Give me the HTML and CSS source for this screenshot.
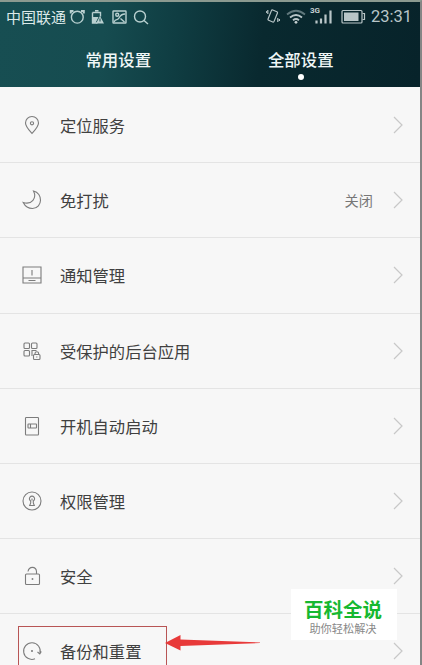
FILE: index.html
```html
<!DOCTYPE html>
<html lang="zh-CN">
<head>
<meta charset="utf-8">
<title>全部设置</title>
<link rel="stylesheet" href="styles.css">
</head>
<body>
<div class="phone">
  <header class="header">
    <div class="status">
      <span class="carrier">中国联通</span>
      <svg class="status-left" width="82" height="18" viewBox="0 0 82 18" fill="none" stroke="#b9d0d0" stroke-width="1.4">
        <circle cx="8.300" cy="9.200" r="5.900"/><path d="M1.800 5.500V3H4.500M12 3h2.800v2.500" stroke-width="2"/>
        <path d="M23.500 4.500h8v4M23.500 4.500V15h5M26 2.700h3.500"/><path d="M23.500 9h6l-3 6h-3zM31 8l4 7.500h-8z" fill="#b9d0d0" stroke="none"/><path d="M31 10.500v3" stroke="#164a4e" stroke-width="1"/>
        <rect x="44" y="3" width="13" height="12" rx=".5"/><circle cx="48.200" cy="6.800" r="1.500"/><path d="M45 14c2-4 3.500-1 5-4s3-4 6-4M51.500 10.500l4 3.500"/>
        <circle cx="71" cy="8.500" r="5.500"/><path d="m75 12.500 4 3.500"/>
      </svg>
      <svg class="status-right" width="104" height="24" viewBox="0 0 104 24" fill="none" stroke="#b9c6c8" stroke-width="1.200">
        <rect x="3.500" y="6.500" width="6.500" height="11" rx="1" transform="rotate(22 6.750 12)"/><path d="M1.800 6v4M.3 7v2M11.800 14v4M13.400 15v2"/>
        <path d="M21 10.500q9-7.500 18 0" stroke="#60787c" stroke-width="1.700"/><path d="M24 13.500q6-5 12 0M27 16.300q3-2.500 6 0" stroke-width="1.800"/><circle cx="30" cy="18.300" r="1.400" fill="#c5d0d1" stroke="none"/>
        <path d="M50.500 19.500v-3M55 19.500v-5M59.500 19.500V10.500M64.500 19.500V6.500" stroke-width="2.200"/>
        <text x="44" y="9">3G</text>
        <rect x="76" y="6.500" width="20" height="12.500" rx="1"/><path d="M78 8.500h14.500v8.500H78z" fill="#b9c6c8" stroke="none"/><path d="M96.500 9.500h2v6h-2"/>
      </svg>
      <span class="clock">23:31</span>
    </div>
    <nav class="tabs">
      <span class="tab">常用设置</span>
      <span class="tab tab-active">全部设置</span>
    </nav>
  </header>
  <main class="list">
    <div class="row"><svg class="icon" viewBox="0 0 22 22"><path d="M11 19.500C8 16 4.500 12.500 4.500 9a6.500 6.500 0 0 1 13 0c0 3.500-3.500 7-6.500 10.500z"/><circle cx="11" cy="9.300" r="1.600"/></svg><span class="label">定位服务</span><svg class="chevron" viewBox="0 0 10 18"><path d="m1 1 8 8-8 8"/></svg></div>
    <div class="row"><svg class="icon" viewBox="0 0 22 22"><path d="M12.500 2C22 4 22 19 11.500 19.500 7 19.500 4 17 2.200 13.500 11 16 16 9 12.500 2z"/></svg><span class="label">免打扰</span><span class="value">关闭</span><svg class="chevron" viewBox="0 0 10 18"><path d="m1 1 8 8-8 8"/></svg></div>
    <div class="row"><svg class="icon" viewBox="0 0 22 22"><path d="M2 3h18v16H2zM2 14h18M7.500 16.500h7M11 6v5.500"/></svg><span class="label">通知管理</span><svg class="chevron" viewBox="0 0 10 18"><path d="m1 1 8 8-8 8"/></svg></div>
    <div class="row"><svg class="icon" viewBox="0 0 22 22"><rect x="3" y="3" width="5.500" height="5.500" rx="1"/><rect x="10.500" y="3" width="5.500" height="5.500" rx="1"/><rect x="3" y="10.500" width="5.500" height="5.500" rx="1"/><path d="M11 16v-5.500h4.500"/><rect x="12.500" y="14.500" width="6.500" height="5" rx="1"/><path d="M14 14.500v-1a1.800 1.800 0 0 1 3.600 0v1M15.800 16.500v1"/></svg><span class="label">受保护的后台应用</span><svg class="chevron" viewBox="0 0 10 18"><path d="m1 1 8 8-8 8"/></svg></div>
    <div class="row"><svg class="icon" viewBox="0 0 22 22"><rect x="4.500" y="2.500" width="13" height="17.500" rx=".7"/><rect x="7" y="9" width="8.500" height="4" rx=".5"/><path d="M9.500 9v4"/></svg><span class="label">开机自动启动</span><svg class="chevron" viewBox="0 0 10 18"><path d="m1 1 8 8-8 8"/></svg></div>
    <div class="row"><svg class="icon" viewBox="0 0 22 22"><circle cx="11" cy="11" r="9"/><path d="M9.700 11a2.600 2.600 0 1 1 2.600 0v2l1 2.500H8.700l1-2.500zM11 8.500v2"/></svg><span class="label">权限管理</span><svg class="chevron" viewBox="0 0 10 18"><path d="m1 1 8 8-8 8"/></svg></div>
    <div class="row"><svg class="icon" viewBox="0 0 22 22"><rect x="4.500" y="9" width="14" height="10.500" rx="1"/><path d="M7 6.500C8 1 15 1 15.500 6.500V9"/><circle cx="11.500" cy="14" r=".4"/></svg><span class="label">安全</span><svg class="chevron" viewBox="0 0 10 18"><path d="m1 1 8 8-8 8"/></svg></div>
    <div class="row"><svg class="icon" viewBox="0 0 22 22"><path d="M14 18.800A8.300 8.300 0 1 1 19 13M16.500 12l2.300 2 1.500-2.500"/><circle cx="11" cy="11" r=".5"/></svg><span class="label">备份和重置</span><svg class="chevron" viewBox="0 0 10 18"><path d="m1 1 8 8-8 8"/></svg></div>
  </main>
  <div class="highlight"></div>
  <svg class="arrow" width="96" height="18" viewBox="0 0 96 18"><path d="M0 9 15.500 1v4.500L95 8.500v.6L15.500 12v4.500z"/></svg>
  <div class="watermark"><strong>百科全说</strong><small>助你轻松解决</small></div>
</div>
</body>
</html>
```
FILE: styles.css
```css
* { box-sizing: border-box; }
body {
  margin: 0;
  font-family: "Noto Sans CJK SC", sans-serif;
  background: #f7f7f7;
}
.phone {
  position: relative;
  width: 422px;
  height: 665px;
  overflow: hidden;
  border-top: 2px solid #8b9a90;
  border-right: 2px solid #858585;
}
.header {
  height: 85px;
  color: #f0f7f7;
  background: linear-gradient(96deg, #174e52 0%, #164c50 25%, #0f3d42 42%, #09292f 62%, #07232a 100%);
}
.status {
  display: flex;
  align-items: center;
  height: 30px;
  padding: 0 7px 0 6px;
}
.carrier { font-size: 15px; line-height: 20px; width: 63px; white-space: nowrap; color: #dce9e9; }
.status-left { margin-top: -1px; }
.status-right { margin-left: auto; margin-top: -3px; }
.status-right text {
  font: bold 8px Roboto, sans-serif;
  fill: #c5d0d1;
  stroke: none;
}
.clock {
  width: 42px;
  margin-left: 1px;
  font: 16.5px/20px Roboto, sans-serif;
  color: #b9c6c8;
}
.tabs {
  display: flex;
  padding: 0 28px 0 27px;
}
.tab {
  position: relative;
  flex: 1;
  text-align: center;
  font-size: 16.400px;
  font-weight: 500;
  line-height: 55px;
}
.tab-active::after {
  content: "";
  position: absolute;
  left: 50%;
  top: 42px;
  width: 6px;
  height: 6px;
  margin-left: -3px;
  border-radius: 50%;
  background: #fff;
}
.list { padding-top: 1px; }
.row {
  display: flex;
  align-items: center;
  height: 75.2px;
  padding: 0 17px 0 21px;
  border-bottom: 1px solid #e4e4e4;
}
.icon {
  width: 22px;
  height: 22px;
  margin-right: 17px;
  fill: none;
  stroke: #7c7c7c;
  stroke-width: 1.1;
}
.label { font-size: 16.300px; line-height: 24px; color: #404040; }
.value { margin-left: auto; margin-right: 20px; font-size: 14.200px; color: #777; }
.chevron {
  width: 10px;
  height: 18px;
  margin-left: auto;
  fill: none;
  stroke: #c8c8c8;
  stroke-width: 1.200;
}
.value + .chevron { margin-left: 0; }
.highlight {
  position: absolute;
  left: 18px;
  top: 624px;
  width: 149px;
  height: 50px;
  border: 1px solid #b85555;
}
.arrow {
  position: absolute;
  left: 165px;
  top: 632px;
  fill: #e83a3a;
}
.watermark {
  position: absolute;
  left: 291px;
  top: 587px;
  width: 106px;
  height: 51px;
  display: flex;
  flex-direction: column;
  align-items: center;
  padding: 9px 2px 0 0;
  background: #fff;
}
.watermark strong { font-size: 19.500px; line-height: 22px; font-weight: 700; color: #16b830; }
.watermark small { font-size: 11.200px; line-height: 16px; color: #888; }
```
